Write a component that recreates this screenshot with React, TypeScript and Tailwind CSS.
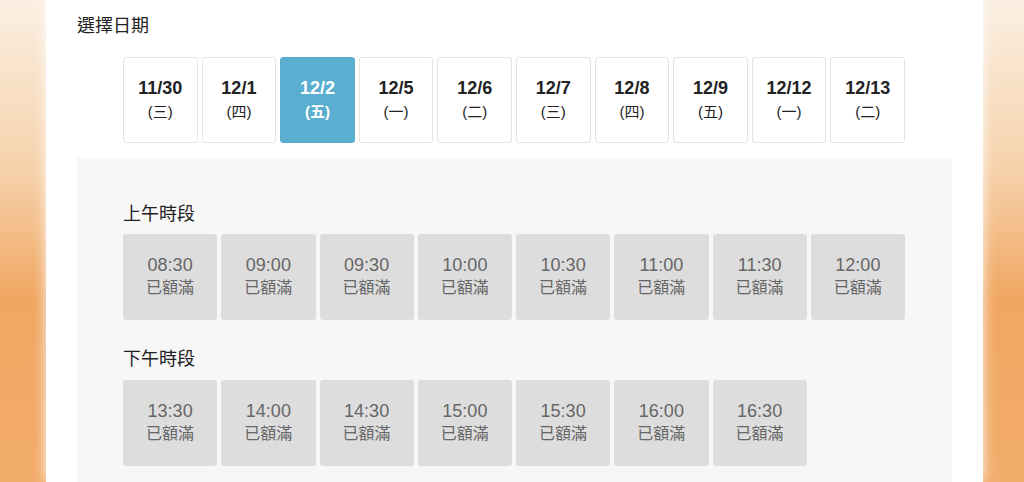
import React from 'react';

const dates = [
  { d: '11/30', w: '(三)' },
  { d: '12/1', w: '(四)' },
  { d: '12/2', w: '(五)' },
  { d: '12/5', w: '(一)' },
  { d: '12/6', w: '(二)' },
  { d: '12/7', w: '(三)' },
  { d: '12/8', w: '(四)' },
  { d: '12/9', w: '(五)' },
  { d: '12/12', w: '(一)' },
  { d: '12/13', w: '(二)' },
];

const morning = ['08:30', '09:00', '09:30', '10:00', '10:30', '11:00', '11:30', '12:00'];
const afternoon = ['13:30', '14:00', '14:30', '15:00', '15:30', '16:00', '16:30'];

const font = { fontFamily: '"Liberation Sans", "Noto Sans CJK TC", sans-serif' };

function Slot({ t }: { t: string }) {
  return (
    <div className="h-[86px] rounded-[3px] bg-[#dddddd] flex flex-col items-center justify-center text-[#666666]">
      <div className="text-[18px] leading-[22px]">{t}</div>
      <div className="text-[16px] leading-[24px]">已額滿</div>
    </div>
  );
}

export default function App() {
  return (
    <div className="h-[482px] overflow-hidden flex bg-[linear-gradient(to_bottom,#fbefe2_0%,#f6d2ab_35%,#f0a762_62%,#f2ac6c_100%)]" style={font}>
      <div className="ml-[46px] w-[937px] h-full bg-white pl-[31px] shadow-[0_0_12px_rgba(255,255,255,0.9)]">
        <div className="pt-[15px] text-[18px] leading-[22px] text-[#222]">選擇日期</div>

        <div className="ml-[46px] mt-[20px] w-[782px] grid grid-cols-10 gap-[4px]">
          {dates.map((x, i) => {
            const active = i === 2;
            return (
              <div
                key={x.d}
                className={
                  active
                    ? 'h-[86px] rounded-[3px] bg-[#5aafd0] border border-[#5aafd0] flex flex-col items-center justify-center text-white'
                    : 'h-[86px] rounded-[3px] bg-white border border-[#e3e3e3] flex flex-col items-center justify-center text-[#222]'
                }
              >
                <div className="text-[18px] font-bold leading-[22px] mt-[2px]">{x.d}</div>
                <div className={active ? 'text-[15px] font-bold leading-[26px]' : 'text-[15px] leading-[26px]'}>{x.w}</div>
              </div>
            );
          })}
        </div>

        <div className="mt-[15px] w-[875px] h-[400px] bg-[#f7f7f7] pl-[46px] pt-[45px]">
          <div className="text-[18px] leading-[22px] text-[#222] mb-[9px]">上午時段</div>
          <div className="w-[782px] grid grid-cols-8 gap-[4px]">
            {morning.map((t) => (
              <Slot key={t} t={t} />
            ))}
          </div>
          <div className="mt-[28px] text-[18px] leading-[22px] text-[#222] mb-[10px]">下午時段</div>
          <div className="w-[782px] grid grid-cols-8 gap-[4px]">
            {afternoon.map((t) => (
              <Slot key={t} t={t} />
            ))}
          </div>
        </div>
      </div>
    </div>
  );
}
